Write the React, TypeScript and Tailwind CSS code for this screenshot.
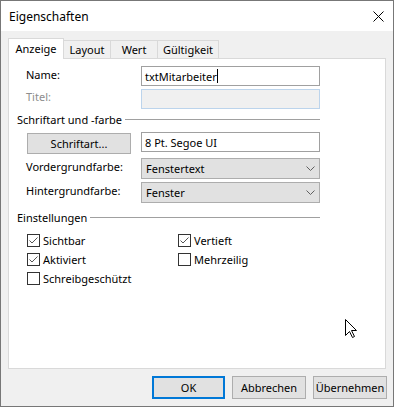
import React from 'react'

const font = "font-['Noto_Sans',sans-serif] text-[11px] leading-[15px]"

function Chevron() {
  return (
    <svg width="9" height="5" viewBox="0 0 9 5">
      <path d="M0.5 0.5 L4.5 4.5 L8.5 0.5" fill="none" stroke="#606060" strokeWidth="1" />
    </svg>
  )
}

function CheckBox({ label, checked }: { label: string; checked?: boolean }) {
  return (
    <div className="flex items-center h-[13px] gap-[3px]">
      <span className="w-[13px] h-[13px] border border-[#333] bg-white flex items-center justify-center shrink-0">
        {checked && (
          <svg width="11" height="11" viewBox="0 0 11 11">
            <path d="M1.5 5.5 L4 8 L9.5 2.5" fill="none" stroke="#555" strokeWidth="1" />
          </svg>
        )}
      </span>
      <span className="text-black">{label}</span>
    </div>
  )
}

function GroupHeader({ title }: { title: string }) {
  return (
    <div className="flex items-center h-[14px] pl-[8px] pr-[65px]">
      <span className="text-black whitespace-nowrap">{title}</span>
      <span className="flex-1 h-px bg-[#a0a0a0] ml-[3px]" />
    </div>
  )
}

function Select({ value }: { value: string }) {
  return (
    <div className="w-[179px] h-[21px] bg-[#e1e1e1] border border-[#adadad] flex items-center justify-between pl-[4px] pr-[4px]">
      <span className="text-black">{value}</span>
      <Chevron />
    </div>
  )
}

function DialogButton({ label, primary, w }: { label: string; primary?: boolean; w: string }) {
  return (
    <button
      className={`${w} h-[23px] bg-[#e1e1e1] flex items-center justify-center text-black ${
        primary ? 'border-2 border-[#0078d7]' : 'border border-[#adadad]'
      }`}
    >
      {label}
    </button>
  )
}

export default function App() {
  return (
    <div className={`relative w-[394px] h-[407px] border border-[#777] bg-[#f0f0f0] flex flex-col ${font}`}>
      {/* Title bar */}
      <div className="h-[30px] bg-white flex items-center justify-between pl-[8px] pr-[9px]">
        <span className="text-black text-[12px]">Eigenschaften</span>
        <svg width="11" height="11" viewBox="0 0 11 11">
          <path d="M0.5 0.5 L10.5 10.5 M10.5 0.5 L0.5 10.5" stroke="#000" strokeWidth="1" fill="none" />
        </svg>
      </div>

      {/* Tabs */}
      <div className="pt-[7px] pl-[7px] flex items-end h-[27px]">
        <div className="relative z-10 w-[56px] h-[21px] -mb-px bg-white border border-b-0 border-[#d9d9d9] flex justify-center pt-[2px] text-black">
          Anzeige
        </div>
        <div className="-ml-px w-[48px] h-[18px] bg-[#f0f0f0] border border-b-0 border-[#d9d9d9] flex justify-center pt-[1px] text-black">
          Layout
        </div>
        <div className="-ml-px w-[48px] h-[18px] bg-[#f0f0f0] border border-b-0 border-[#d9d9d9] flex justify-center pt-[1px] text-black">
          Wert
        </div>
        <div className="-ml-px w-[62px] h-[18px] bg-[#f0f0f0] border border-b-0 border-[#d9d9d9] flex justify-center pt-[1px] text-black">
          Gültigkeit
        </div>
      </div>

      {/* Panel */}
      <div className="ml-[7px] w-[378px] h-[311px] bg-white border border-[#d9d9d9] flex flex-col">
        <div className="mt-[7px] flex pl-[17px] h-[20px]">
          <span className="w-[115px] text-black pt-[1px]">Name:</span>
          <div className="w-[179px] h-[20px] border border-[#a0a0a0] bg-white flex items-center pl-[3px] text-black">
            txtMitarbeiter
            <span className="w-px h-[14px] bg-black" />
          </div>
        </div>
        <div className="mt-[3px] flex pl-[17px] h-[20px]">
          <span className="w-[115px] text-[#8d8d8d]">Titel:</span>
          <div className="w-[179px] h-[20px] border border-[#bcd4ec] bg-[#f0f0f0]" />
        </div>

        <div className="mt-[3px]">
          <GroupHeader title="Schriftart und -farbe" />
        </div>

        <div className="mt-[6px] flex h-[22px] pl-[18px]">
          <div className="mt-px w-[104px] h-[21px] bg-[#e1e1e1] border border-[#adadad] flex items-center justify-center text-black">
            Schriftart...
          </div>
          <div className="ml-[10px] w-[179px] h-[20px] border border-[#a0a0a0] bg-white flex items-center pl-[3px] text-black">
            8 Pt. Segoe UI
          </div>
        </div>

        <div className="mt-[4px] flex pl-[17px] h-[21px]">
          <span className="w-[115px] text-black pt-[1px]">Vordergrundfarbe:</span>
          <Select value="Fenstertext" />
        </div>
        <div className="mt-[3px] flex pl-[17px] h-[21px]">
          <span className="w-[115px] text-black pt-[1px]">Hintergrundfarbe:</span>
          <Select value="Fenster" />
        </div>

        <div className="mt-[7px]">
          <GroupHeader title="Einstellungen" />
        </div>

        <div className="mt-[10px] pl-[18px] grid grid-cols-[151px_1fr] gap-y-[6px]">
          <CheckBox label="Sichtbar" checked />
          <CheckBox label="Vertieft" checked />
          <CheckBox label="Aktiviert" checked />
          <CheckBox label="Mehrzeilig" />
          <CheckBox label="Schreibgeschützt" />
        </div>
      </div>

      {/* Footer */}
      <div className="mt-[7px] flex justify-end gap-[7px] pr-[6px]">
        <DialogButton label="OK" primary w="w-[73px]" />
        <DialogButton label="Abbrechen" w="w-[74px]" />
        <DialogButton label="Übernehmen" w="w-[74px]" />
      </div>

      {/* Mouse pointer */}
      <svg className="absolute left-[344px] top-[318px]" width="13" height="20" viewBox="0 0 13 20">
        <path d="M0.5 0.5 L0.5 16.5 L4.5 12.5 L7.5 18.5 L9.5 17.5 L6.5 11.5 L11.5 11.5 Z" fill="#fff" stroke="#000" strokeWidth="1" />
      </svg>
    </div>
  )
}
